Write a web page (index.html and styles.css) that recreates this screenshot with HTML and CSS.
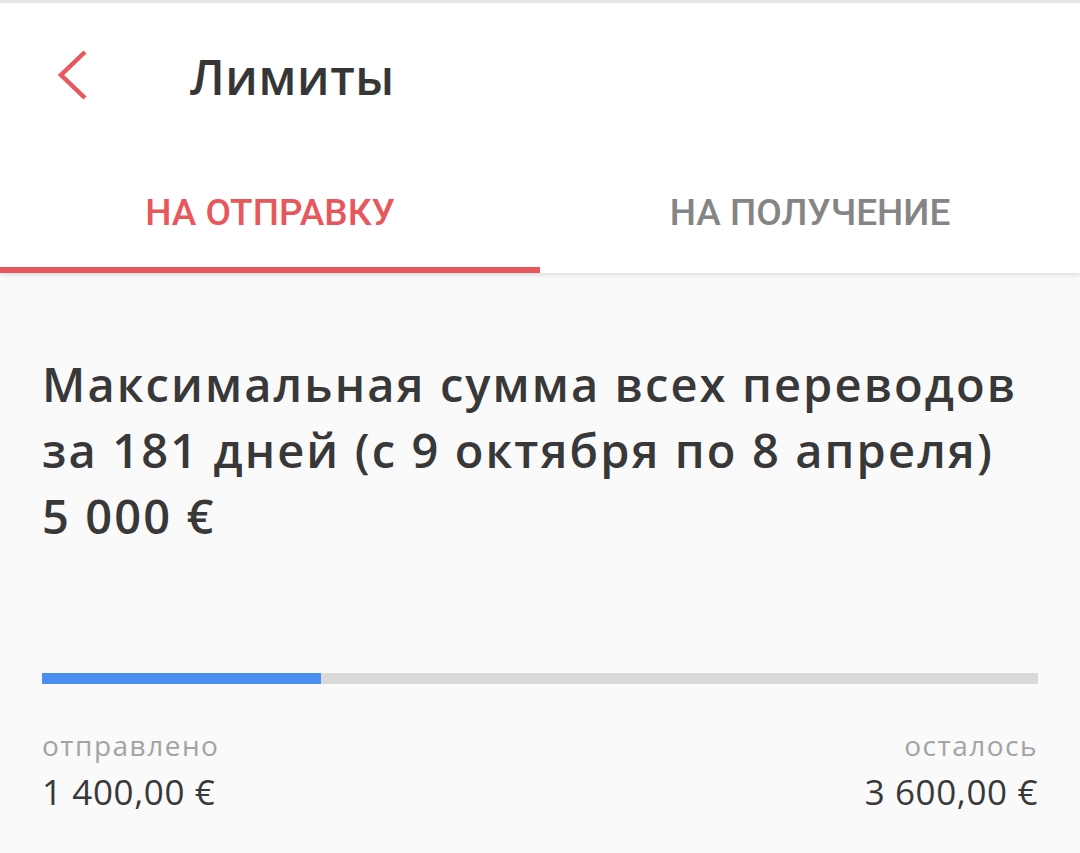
FILE: index.html
```html
<!DOCTYPE html>
<html lang="ru">
  <head>
    <meta charset="UTF-8" />
    <meta name="viewport" content="width=device-width, initial-scale=1.0" />
    <title>Лимиты</title>
    <link rel="stylesheet" href="styles.css">
  </head>
  <body>
    <!-- Top bar with back arrow and tabs -->
    <header class="header">
      <div class="toolbar">
        <button class="back" aria-label="Назад">
          <svg width="40" height="60" viewBox="0 0 40 60">
            <polyline points="31,6 7,29 31,52" fill="none" stroke="#e8575b" stroke-width="4.5" />
          </svg>
        </button>
        <h1 class="title">Лимиты</h1>
      </div>
      <nav class="tabs">
        <a class="tab active">НА ОТПРАВКУ</a>
        <a class="tab">НА ПОЛУЧЕНИЕ</a>
      </nav>
    </header>

    <main class="content">
      <h2 class="limit-title">
        Максимальная сумма всех переводов<br>
        за 181 дней (с 9 октября по 8 апреля)<br>
        5 000 €
      </h2>

      <div class="progress">
        <div class="progress-fill" style="width: 28%"></div>
      </div>

      <div class="totals">
        <div class="total">
          <span class="total-label">отправлено</span>
          <span class="total-value">1 400,00 €</span>
        </div>
        <div class="total right">
          <span class="total-label">осталось</span>
          <span class="total-value">3 600,00 €</span>
        </div>
      </div>
    </main>
  </body>
</html>
```

FILE: styles.css
```css
html,
body {
  margin: 0;
  padding: 0;
  width: 100%;
  height: 100%;
  overflow: hidden;
}

body {
  font-family: "Open Sans", "Noto Sans", sans-serif;
  background: #fafafa;
  color: #383838;
}

.header {
  background: #fff;
  border-top: 3px solid #e6e6e6;
  box-shadow: 0 2px 5px rgba(0, 0, 0, 0.12);
  position: relative;
}

.toolbar {
  display: flex;
  align-items: center;
  height: 150px;
}

.back {
  border: none;
  background: none;
  padding: 0;
  margin-left: 54px;
  margin-top: -4px;
  display: flex;
  cursor: pointer;
}

.title {
  margin: -4px 0 0 96px;
  font-size: 48px;
  font-weight: 600;
  letter-spacing: 0.6px;
  color: #363636;
}

.tabs {
  display: flex;
  height: 120px;
}

.tab {
  flex: 1;
  display: flex;
  align-items: center;
  justify-content: center;
  padding-top: 4px;
  font-family: Roboto, "Noto Sans", sans-serif;
  font-weight: 500;
  font-size: 37px;
  color: #858585;
  box-sizing: border-box;
  border-bottom: 6px solid transparent;
}

.tab.active {
  color: #e8575b;
  border-bottom-color: #e8575b;
}

.content {
  padding: 78px 42px 0;
}

.limit-title {
  margin: 0;
  font-size: 47px;
  line-height: 66px;
  font-weight: 600;
  letter-spacing: 2.1px;
  color: #383838;
}

.progress {
  margin-top: 124px;
  height: 11px;
  background: #d9d9d9;
}

.progress-fill {
  height: 100%;
  background: #4a8ef0;
}

.totals {
  display: flex;
  justify-content: space-between;
  margin-top: 42px;
}

.total {
  display: flex;
  flex-direction: column;
  gap: 4px;
}

.total.right {
  align-items: flex-end;
}

.total-label {
  font-size: 28px;
  color: #a3a3a3;
  letter-spacing: 1.5px;
}

.total-value {
  font-size: 35px;
  letter-spacing: 0.6px;
  color: #383838;
}
```
